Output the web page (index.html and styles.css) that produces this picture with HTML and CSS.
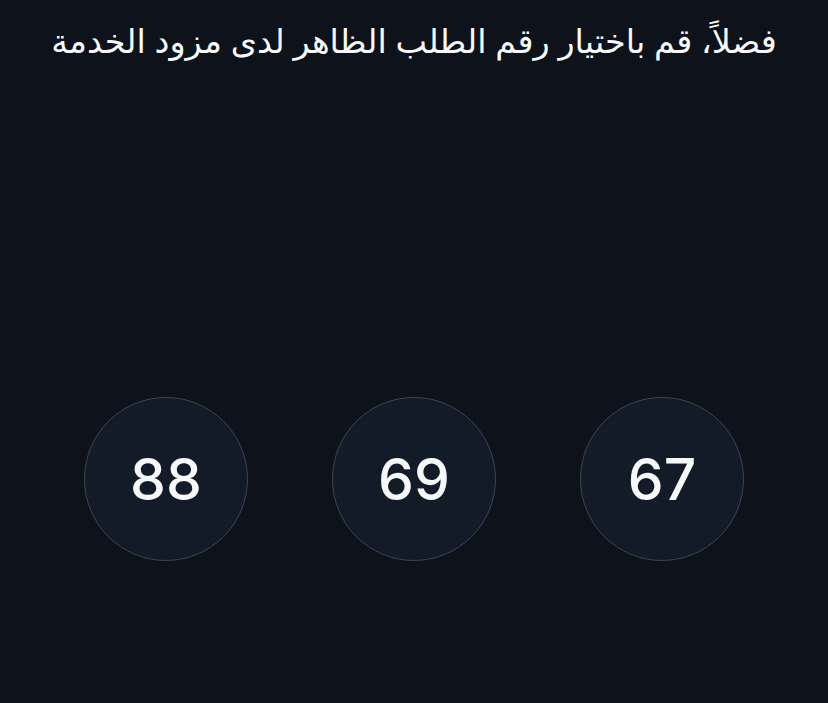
FILE: index.html
```html
<!DOCTYPE html>
<html lang="ar" dir="rtl">
<head>
<meta charset="utf-8">
<link rel="stylesheet" href="styles.css">
</head>
<body>
<main class="screen">
  <h1 class="title">فضلاً، قم باختيار رقم الطلب الظاهر لدى مزود الخدمة</h1>
  <div class="choices">
    <button class="choice">67</button>
    <button class="choice">69</button>
    <button class="choice">88</button>
  </div>
</main>
</body>
</html>
```
FILE: styles.css
```css
html, body {
  margin: 0;
  padding: 0;
  background: #0e121a;
}
.screen {
  width: 828px;
  height: 703px;
  display: flex;
  flex-direction: column;
  align-items: center;
  font-family: "Noto Sans", "DejaVu Sans", sans-serif;
  color: #f7f8fa;
}
.title {
  margin: 15px 0 0;
  font-size: 33.5px;
  font-weight: 400;
  line-height: 50px;
  text-align: center;
}
.choices {
  margin-top: 332px;
  display: flex;
  gap: 84px;
}
.choice {
  width: 164px;
  height: 164px;
  border-radius: 50%;
  border: 1.5px solid #3d4554;
  background: #131a28;
  color: #f7f8fa;
  font-family: "Inter", "Noto Sans", sans-serif;
  font-size: 57px;
  font-weight: 500;
  display: flex;
  align-items: center;
  justify-content: center;
  padding: 0;
  direction: ltr;
}
```
